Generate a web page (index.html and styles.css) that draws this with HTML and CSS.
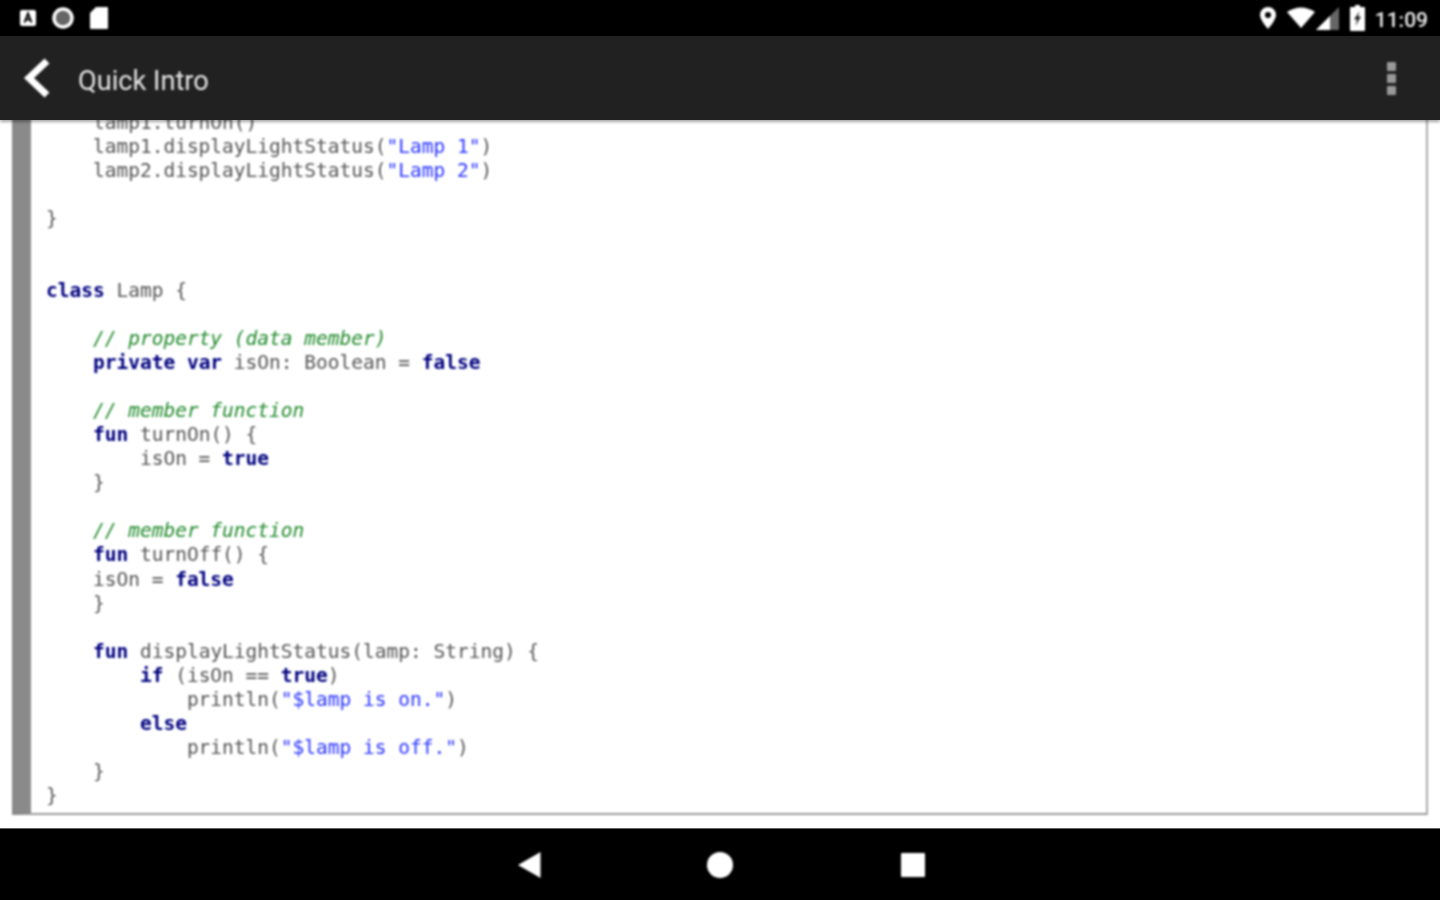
FILE: index.html
```html
<!DOCTYPE html>
<html lang="en">
<head>
<meta charset="utf-8">
<title>Quick Intro</title>
<link rel="stylesheet" href="styles.css">
</head>
<body>
<div class="screen">
  <div class="statusbar">
    <div class="status-group soft">
      <svg width="18" height="18" viewBox="0 0 18 18"><rect x="1" y="1" width="16" height="16" rx="2" fill="#fff"/><path d="M5.5 13.5 9 4.5l3.500 9M7 10.500h4" fill="none" stroke="#000" stroke-width="2"/></svg>
      <svg width="24" height="24" viewBox="0 0 24 24"><circle cx="12" cy="12" r="9" fill="#666" stroke="#fff" stroke-width="3.500"/></svg>
      <svg width="20" height="24" viewBox="0 0 20 24"><path d="M7 1h11a1 1 0 0 1 1 1v20a1 1 0 0 1-1 1H2a1 1 0 0 1-1-1V7z" fill="#fff"/></svg>
    </div>
    <div class="status-group right soft">
      <svg width="18" height="24" viewBox="0 0 18 24"><path fill-rule="evenodd" d="M9 1a8 8 0 0 1 8 8c0 5-8 14-8 14S1 14 1 9a8 8 0 0 1 8-8zm0 5a3 3 0 1 0 0 6 3 3 0 0 0 0-6z" fill="#fff"/></svg>
      <div class="signal-pair">
        <svg width="28" height="22" viewBox="0 0 28 22"><path d="M14 21 0 5Q14-4 28 5z" fill="#fff"/></svg>
        <svg width="24" height="24" viewBox="0 0 24 24"><path d="M24 1v23H1z" fill="#666"/><path d="M15 10v14H1z" fill="#fff"/></svg>
      </div>
      <svg width="15" height="26" viewBox="0 0 15 26"><path d="M5 0h5v2h4a1 1 0 0 1 1 1v22a1 1 0 0 1-1 1H1a1 1 0 0 1-1-1V3a1 1 0 0 1 1-1h4z" fill="#fff"/><path d="M9.500 6 4 14.500h3L5.500 21l5.500-9.500H8z" fill="#222"/></svg>
      <span class="clock">11:09</span>
    </div>
  </div>
  <header class="toolbar">
    <svg class="soft" width="30" height="42" viewBox="0 0 30 42"><path d="M25 4 7 21l18 17" fill="none" stroke="#fff" stroke-width="7"/></svg>
    <h1 class="title soft">Quick Intro</h1>
    <div class="overflow soft"><i></i><i></i><i></i></div>
  </header>
  <main class="content">
    <pre class="code soft">    lamp1.turnOn()
    lamp1.displayLightStatus(<span class="s">"Lamp 1"</span>)
    lamp2.displayLightStatus(<span class="s">"Lamp 2"</span>)

}


<b>class</b> Lamp {

    <em>// property (data member)</em>
    <b>private var</b> isOn: Boolean = <b>false</b>

    <em>// member function</em>
    <b>fun</b> turnOn() {
        isOn = <b>true</b>
    }

    <em>// member function</em>
    <b>fun</b> turnOff() {
    isOn = <b>false</b>
    }

    <b>fun</b> displayLightStatus(lamp: String) {
        <b>if</b> (isOn == <b>true</b>)
            println(<span class="s">"$lamp is on."</span>)
        <b>else</b>
            println(<span class="s">"$lamp is off."</span>)
    }
}</pre>
  </main>
  <nav class="navbar">
    <svg class="soft" width="24" height="26" viewBox="0 0 24 26"><path d="M22.500 0v26L0 13z" fill="#fff"/></svg>
    <svg class="soft" width="26" height="26" viewBox="0 0 26 26"><circle cx="13" cy="13" r="13" fill="#fff"/></svg>
    <svg class="recents soft" width="24" height="24" viewBox="0 0 24 24"><rect width="24" height="24" rx="1" fill="#fff"/></svg>
  </nav>
</div>
</body>
</html>
```

FILE: styles.css
```css
* { box-sizing: border-box; }
html, body { margin: 0; padding: 0; background: #fff; }
.screen {
  width: 1440px;
  height: 900px;
  display: flex;
  flex-direction: column;
  overflow: hidden;
}
.soft { filter: blur(0.8px); }
.statusbar {
  height: 36px;
  flex: none;
  background: #000;
  display: flex;
  align-items: center;
  justify-content: space-between;
  padding: 0 12px 0 19px;
}
.status-group { display: flex; align-items: center; gap: 14px; }
.status-group.right { gap: 10px; }
.signal-pair { display: flex; align-items: center; margin-right: 1px; }
.clock {
  color: #eee;
  font: 500 21px/36px Roboto, sans-serif;
  padding-top: 3px;
}
.toolbar {
  height: 84px;
  flex: none;
  background: #212121;
  display: flex;
  align-items: center;
  padding: 0 44px 0 22px;
  position: relative;
  z-index: 1;
  box-shadow: 0 2px 3px rgba(0, 0, 0, .35);
}
.title {
  margin: 0 0 0 26px;
  padding-top: 5px;
  flex: 1;
  color: #e6e6e6;
  font: 400 27.2px/74px Roboto, sans-serif;
}
.overflow { display: flex; flex-direction: column; gap: 3px; }
.overflow i { display: block; width: 9px; height: 9px; background: #999; border-radius: 1px; }
.content {
  flex: 1;
  min-height: 0;
  background: #fff;
  display: flex;
  flex-direction: column;
  justify-content: flex-end;
  padding: 0 12px 13px;
  overflow: hidden;
}
.code {
  flex: none;
  margin: 0;
  padding: 0 0 5px 15px;
  background: #fff;
  border-left: 19px solid #8a8a8a;
  border-right: 2px solid #aaa;
  border-bottom: 2px solid #999;
  color: #555;
  font: 400 19.5px/24.04px "DejaVu Sans Mono", monospace;
}
.code b { color: #000080; font-weight: 700; }
.code em { color: #1f8a2a; font-style: italic; }
.code .s { color: #2a35ff; }
.navbar {
  height: 72px;
  flex: none;
  background: #000;
  border-top: 1px solid #666;
  display: flex;
  align-items: center;
  justify-content: center;
  gap: 165px;
  padding-left: 3px;
}
.recents { margin-left: 3px; }
```
